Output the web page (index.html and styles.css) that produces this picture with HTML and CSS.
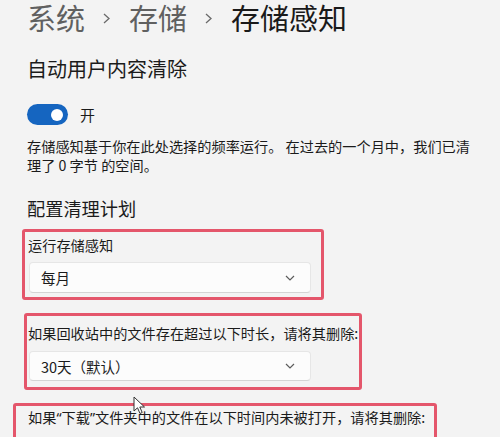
FILE: index.html
```html
<!DOCTYPE html>
<html lang="zh-CN">
<head>
    <meta charset="UTF-8">
    <meta name="viewport" content="width=device-width, initial-scale=1.0">
    <title>存储感知</title>
    <link rel="stylesheet" href="styles.css">
</head>
<body>
    <div class="page">
        <h1 class="breadcrumb">
            <span class="crumb">系统</span>
            <svg class="crumb-sep" width="7" height="11" viewBox="0 0 7 11"><path d="M1 1 L6 5.5 L1 10" fill="none" stroke="#6a6a6a" stroke-width="1.3"/></svg>
            <span class="crumb">存储</span>
            <svg class="crumb-sep" width="7" height="11" viewBox="0 0 7 11"><path d="M1 1 L6 5.5 L1 10" fill="none" stroke="#6a6a6a" stroke-width="1.3"/></svg>
            <span class="crumb current">存储感知</span>
        </h1>

        <h2 class="section-title">自动用户内容清除</h2>

        <div class="toggle-row">
            <div class="toggle"><span class="knob"></span></div>
            <span class="toggle-label">开</span>
        </div>

        <p class="desc">存储感知基于你在此处选择的频率运行。 在过去的一个月中，我们已清理了 0 字节 的空间。</p>

        <h3 class="sub-title">配置清理计划</h3>

        <div class="mark mark-run">
            <div class="field-label">运行存储感知</div>
            <div class="select">
                <span>每月</span>
                <svg width="10" height="6" viewBox="0 0 10 6"><path d="M1 1 L5 5 L9 1" fill="none" stroke="#5c5c5c" stroke-width="1.2"/></svg>
            </div>
        </div>

        <div class="mark mark-bin">
            <div class="field-label">如果回收站中的文件存在超过以下时长，请将其删除:</div>
            <div class="select">
                <span>30天（默认）</span>
                <svg width="10" height="6" viewBox="0 0 10 6"><path d="M1 1 L5 5 L9 1" fill="none" stroke="#5c5c5c" stroke-width="1.2"/></svg>
            </div>
        </div>

        <div class="mark mark-dl">
            <div class="field-label">如果<span class="q">“</span>下载<span class="q">”</span>文件夹中的文件在以下时间内未被打开，请将其删除:</div>
        </div>
    </div>

    <!-- 鼠标指针 -->
    <svg class="cursor" width="14" height="20" viewBox="0 0 14 20"><path d="M1 1 L1 15 L4.5 11.8 L7 17.5 L9.2 16.5 L6.8 11 L11.5 11 Z" fill="#fff" stroke="#333" stroke-width="1" stroke-linejoin="round"/></svg>
</body>
</html>
```

FILE: styles.css
```css
body {
    margin: 0;
    background: #f3f3f3;
    font-family: "Noto Sans CJK SC", "Noto Sans", sans-serif;
    color: #1b1b1b;
    position: relative;
    height: 437px;
    overflow: hidden;
}

.page {
    padding-left: 27px;
}

.breadcrumb {
    display: flex;
    align-items: center;
    margin: 0;
    font-size: 29px;
    font-weight: normal;
    line-height: 35px;
}

.crumb {
    color: #606060;
}

.crumb.current {
    color: #1a1a1a;
}

.crumb-sep {
    margin: 2px 19px 0 18px;
}

.section-title {
    margin: 20px 0 0;
    font-size: 20px;
    font-weight: normal;
    line-height: 28px;
}

.toggle-row {
    display: flex;
    align-items: center;
    gap: 12px;
    margin-top: 21px;
    height: 21px;
}

.toggle {
    width: 41px;
    height: 21px;
    border-radius: 11px;
    background: #1565c0;
    position: relative;
}

.knob {
    position: absolute;
    right: 5px;
    top: 4.5px;
    width: 12px;
    height: 12px;
    border-radius: 50%;
    background: #fff;
}

.toggle-label {
    font-size: 15px;
}

.desc {
    width: 450px;
    margin: 12px 0 0;
    font-size: 14.2px;
    line-height: 18.5px;
}

.sub-title {
    margin: 21px 0 0;
    font-size: 18.2px;
    font-weight: normal;
    line-height: 26px;
}

.mark {
    border: 3px solid #e4566b;
    border-radius: 3px;
    width: fit-content;
    box-sizing: border-box;
}

.mark-run {
    margin: 8px 0 0 -5px;
    padding: 3px 10px 4px 3px;
}

.mark-bin {
    margin: 13px 0 0 -3px;
    padding: 7px 1px 6px 1px;
}

.mark-dl {
    margin: 13px 0 0 -14px;
    padding: 1px 9px 20px 12px;
}

.field-label {
    font-size: 14.2px;
    line-height: 20px;
    white-space: nowrap;
}

.q {
    font-family: "Noto Sans", sans-serif;
}

.select {
    display: flex;
    align-items: center;
    justify-content: space-between;
    width: 282px;
    height: 31px;
    box-sizing: border-box;
    margin: 7px 0 0 1px;
    padding: 0 15px 0 11px;
    background: #fcfcfc;
    border: 1px solid #e6e6e6;
    border-bottom-color: #d4d4d4;
    border-radius: 4px;
    font-size: 14.5px;
}

.mark-bin .select {
    margin-top: 8px;
    height: 30px;
}

.cursor {
    position: absolute;
    left: 133px;
    top: 396px;
}
```
